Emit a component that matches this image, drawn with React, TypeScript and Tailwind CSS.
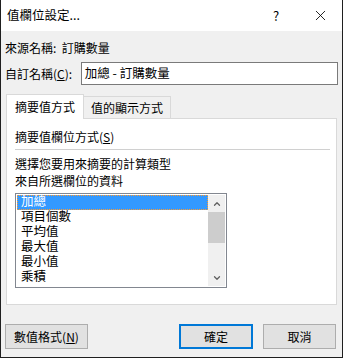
import { X, ChevronUp, ChevronDown } from 'lucide-react'

const items = ['加總', '項目個數', '平均值', '最大值', '最小值', '乘積']

export default function App() {
  return (
    <div
      className="w-[343px] h-[358px] bg-[#f0f0f0] border-x border-b border-[#1f1f1f] flex flex-col text-[12px] leading-none text-black overflow-hidden"
      style={{ fontFamily: '"Noto Sans CJK TC", "Noto Sans", sans-serif' }}
    >
      {/* Title bar */}
      <div className="h-[31px] bg-white flex items-center pl-[6px] shrink-0">
        <span className="text-[12.5px] flex-1">值欄位設定...</span>
        <span className="w-[24px] text-center text-[13px] mr-[24px]">?</span>
        <X size={17} strokeWidth={1.2} className="mr-[13px]" />
      </div>

      <div className="flex flex-col px-[4px]">
        <div className="h-[17px] mt-[8px] flex items-center">來源名稱:&nbsp;&nbsp;訂購數量</div>

        <div className="flex items-center mt-[6px]">
          <span className="w-[76px]">
            自訂名稱(<span className="underline">C</span>):
          </span>
          <div className="w-[258px] h-[23px] bg-white border border-[#7a7a7a] flex items-center pl-[3px] text-[12.5px]">
            加總 - 訂購數量
          </div>
        </div>

        {/* Tabs */}
        <div className="flex items-end mt-[8px] pl-[1px] h-[25px]">
          <div className="w-[78px] h-[25px] bg-white border border-b-0 border-[#d9d9d9] flex items-center justify-center relative top-[1px] z-10">
            摘要值方式
          </div>
          <div className="w-[87px] h-[22px] bg-[#f0f0f0] border border-l-0 border-b-0 border-[#d9d9d9] flex items-center justify-center">
            值的顯示方式
          </div>
        </div>

        <div className="ml-[1px] w-[331px] h-[187px] bg-white border border-[#d9d9d9] px-[8px] flex flex-col">
          <div className="mt-[11px] h-[14px] flex items-center">
            摘要值欄位方式(<span className="underline">S</span>)
          </div>
          <div className="mt-[5px] h-px bg-[#d0d0d0] w-[315px]" />
          <div className="mt-[7px] h-[14px] flex items-center">選擇您要用來摘要的計算類型</div>
          <div className="mt-[3px] h-[14px] flex items-center">來自所選欄位的資料</div>

          {/* Listbox */}
          <div
            className="mt-[5px] w-[212px] h-[95px] border border-[#828790] flex p-px"
            style={{ fontFamily: '"Liberation Sans", "Noto Sans CJK TC", sans-serif' }}
          >
            <div className="flex-1 flex flex-col">
              {items.map((it, i) => (
                <div
                  key={it}
                  className={
                    i === 0
                      ? 'h-[15px] leading-[13px] flex items-center pl-[3px] bg-[#3399ff] text-white border border-dotted border-[#ff9a2e] text-[12.5px]'
                      : 'h-[15px] leading-[15px] flex items-center pl-[4px] text-[12.5px]'
                  }
                >
                  {it}
                </div>
              ))}
            </div>
            <div className="w-[17px] bg-[#f0f0f0] flex flex-col items-center">
              <div className="h-[17px] flex items-center justify-center">
                <ChevronUp size={10} strokeWidth={3} className="text-[#606060]" />
              </div>
              <div className="w-[17px] h-[31px] bg-[#cdcdcd]" />
              <div className="flex-1" />
              <div className="h-[17px] flex items-center justify-center">
                <ChevronDown size={10} strokeWidth={3} className="text-[#606060]" />
              </div>
            </div>
          </div>
        </div>

        {/* Buttons */}
        <div className="flex mt-[19px] items-center">
          <button className="w-[83px] h-[25px] bg-[#e1e1e1] border border-[#adadad] flex items-center justify-center">
            數值格式(<span className="underline">N</span>)
          </button>
          <div className="flex-1" />
          <button className="w-[74px] h-[25px] bg-[#e1e1e1] border-2 border-[#0078d7] flex items-center justify-center">
            確定
          </button>
          <button className="w-[73px] h-[25px] bg-[#e1e1e1] border border-[#adadad] flex items-center justify-center ml-[10px] mr-[2px]">
            取消
          </button>
        </div>
      </div>
    </div>
  )
}
